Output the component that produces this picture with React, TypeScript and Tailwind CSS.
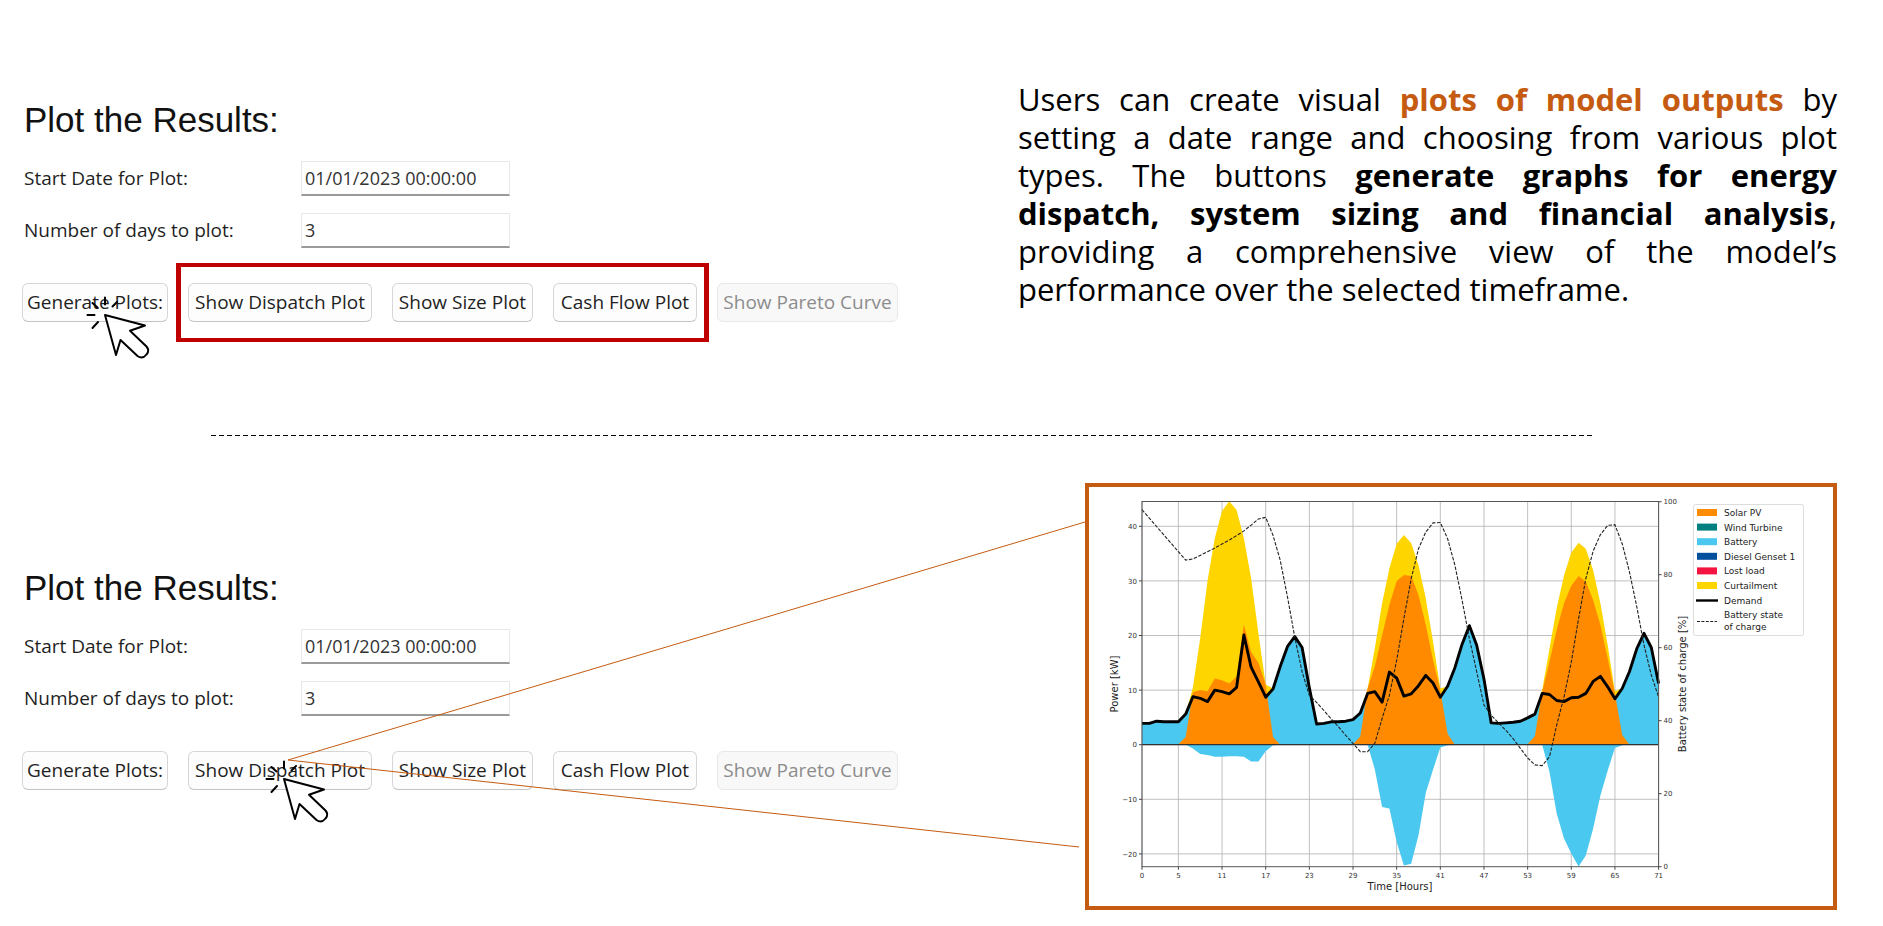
import { useId } from "react";

const px = (h: number) => 53 + h * 7.276;
const py = (v: number) => 257.7 - v * 5.46;
const ps = (s: number) => 379.7 - s * 3.65;

const demand = [
  3.9, 3.9, 4.3, 4.2, 4.2, 4.2, 5.6, 8.8, 8.5, 7.9, 10, 9.7, 9.3, 10.5, 20.1, 14.2, 11.5, 8.7, 10.2, 14.3, 18, 19.8,
  17.8, 10.5, 3.8, 3.9, 4.2, 4.2, 4.3, 4.6, 5.8, 9.4, 9.7, 7.8, 13.3, 12.2, 8.9, 9.3, 10.8, 12.7, 11.3, 8.7, 10.7,
  14.1, 18.4, 21.8, 18.2, 12, 4, 3.9, 4, 4.1, 4.3, 4.9, 5.6, 9.4, 9.2, 8.1, 7.9, 8.6, 8.7, 9.4, 11.6, 12.5, 10.6, 8.4,
  10.3, 13.4, 17.6, 20.4, 17.8, 11.2,
];

const charge = [
  97.8, 95.5, 93.2, 90.9, 88.6, 86.3, 84, 84.3, 85.3, 86.3, 87.3, 88.4, 89.5, 90.7, 92, 93.6, 95.3, 95.7, 90.8, 84,
  73.9, 62.8, 53.4, 47, 45, 42.8, 40.5, 38.3, 36, 33.8, 31.5, 31.5, 33.8, 40.6, 47, 56.6, 68, 78.9, 87.1, 91.7, 94.2,
  94.3, 89.9, 82.6, 73, 62.5, 53.4, 44.3, 41.5, 39.4, 37.4, 35.1, 32.4, 29.8, 27.9, 27.7, 30.1, 38.8, 46.5, 56.1, 68,
  78.9, 86.4, 91, 93.5, 93.7, 88.5, 80.7, 71.2, 60.7, 52.5, 46.5,
];

type Area = { start: number; values: number[] };

const curtailment: Area[] = [
  { start: 6, values: [5.6, 10.5, 19.5, 30, 37.8, 42.8, 44.6, 43, 37.8, 30.5, 20.4, 11, 10.3] },
  { start: 30, values: [5.8, 10.3, 17.6, 25.9, 32.3, 36.8, 38.4, 36.9, 32.9, 26.8, 18.9, 10.3, 10.7] },
  { start: 54, values: [5.6, 10, 17.6, 25, 31, 35.2, 37, 35.9, 32, 25.9, 18.2, 9.8, 10.3] },
];

const solar: Area[] = [
  { start: 5, values: [0.1, 1.4, 9.6, 10, 9.8, 12.1, 11.8, 11.2, 12.5, 22, 17, 15, 11, 1.4, 0] },
  { start: 29, values: [0.1, 1.5, 10.3, 14.3, 20, 25.6, 30, 31.1, 30.9, 27.4, 21.9, 15.5, 10, 2, 0] },
  { start: 53, values: [0.1, 1.6, 9.7, 15.2, 21, 25.9, 29.1, 30.9, 29.9, 26.5, 21.9, 15.8, 9.4, 1.8, 0] },
];

const charging: Area[] = [
  { start: 6, values: [0, -0.7, -1.7, -1.9, -2.2, -2.2, -2.1, -2.1, -2.2, -3.1, -3.1, -1.2, -0.1, 0] },
  { start: 31, values: [0, -4.5, -11.4, -11.7, -17.8, -22.1, -21.8, -16.6, -8.8, -4.6, -0.5, -0.1, 0] },
  { start: 55, values: [0, -5, -12.6, -17.2, -19.9, -22.3, -20.3, -15.4, -9.3, -4.7, -0.6, -0.1, 0] },
];

const line = (values: number[], y: (v: number) => number, start = 0) =>
  values.map((v, i) => `${px(start + i).toFixed(1)},${y(v).toFixed(1)}`).join(" ");

const area = ({ start, values }: Area) =>
  `${px(start)},${py(0)} ${line(values, py, start)} ${px(start + values.length - 1)},${py(0)}`;

const hours = [0, 5, 11, 17, 23, 29, 35, 41, 47, 53, 59, 65, 71];
const powers = [40, 30, 20, 10, 0, -10, -20];

const legend: { name: string; color: string }[] = [
  { name: "Solar PV", color: "#ff8c00" },
  { name: "Wind Turbine", color: "#008080" },
  { name: "Battery", color: "#4ac8f0" },
  { name: "Diesel Genset 1", color: "#00509d" },
  { name: "Lost load", color: "#f4143f" },
  { name: "Curtailment", color: "#ffd500" },
];

function DispatchChart() {
  const left = px(0);
  const right = px(71);
  const top = 14.5;
  const bottom = 379.7;
  return (
    <svg
      viewBox="0 0 744 419"
      role="img"
      aria-label="Dispatch plot"
      className="block h-auto w-full font-['DejaVu_Sans',sans-serif]"
    >
      <g stroke="#b0b0b0" strokeOpacity="0.8" strokeWidth="1">
        {hours.map((h) => (
          <line key={h} x1={px(h)} x2={px(h)} y1={top} y2={bottom} />
        ))}
        {powers.map((p) => (
          <line key={p} x1={left} x2={right} y1={py(p)} y2={py(p)} />
        ))}
      </g>
      {curtailment.map((a) => (
        <polygon key={a.start} points={area(a)} fill="#ffd500" />
      ))}
      <polygon points={area({ start: 0, values: demand })} fill="#4ac8f0" />
      {charging.map((a) => (
        <polygon key={a.start} points={area(a)} fill="#4ac8f0" />
      ))}
      {solar.map((a) => (
        <polygon key={a.start} points={area(a)} fill="#ff8a00" />
      ))}
      <line x1={left} x2={right} y1={py(0)} y2={py(0)} stroke="#333" strokeWidth="1.2" />
      <polyline points={line(demand, py)} fill="none" stroke="#000" strokeWidth="2.9" strokeLinejoin="round" />
      <polyline points={line(charge, ps)} fill="none" stroke="#222" strokeWidth="1.1" strokeDasharray="3.500 1.500" />
      <rect x={left} y={top} width={right - left} height={bottom - top} fill="none" stroke="#555" strokeWidth="1" />
      <g fontSize="7" fill="#333">
        {hours.map((h) => (
          <g key={h}>
            <line x1={px(h)} x2={px(h)} y1={bottom} y2={bottom + 3} stroke="#444" />
            <text x={px(h)} y="391" textAnchor="middle">
              {h}
            </text>
          </g>
        ))}
        {powers.map((p) => (
          <g key={p}>
            <line x1={left - 3} x2={left} y1={py(p)} y2={py(p)} stroke="#444" />
            <text x={left - 5} y={py(p) + 2.6} textAnchor="end">
              {p < 0 ? `−${-p}` : p}
            </text>
          </g>
        ))}
        {[0, 20, 40, 60, 80, 100].map((s) => (
          <g key={s}>
            <line x1={right} x2={right + 3} y1={ps(s)} y2={ps(s)} stroke="#444" />
            <text x={right + 5} y={ps(s) + 2.6}>
              {s}
            </text>
          </g>
        ))}
      </g>
      <g fontSize="10" fill="#222">
        <text x="311" y="403" textAnchor="middle">
          Time [Hours]
        </text>
        <text transform="translate(29 197) rotate(-90)" textAnchor="middle">
          Power [kW]
        </text>
        <text transform="translate(597 197) rotate(-90)" textAnchor="middle">
          Battery state of charge [%]
        </text>
      </g>
      <g fontSize="9" fill="#222">
        <rect x="604.500" y="17.500" width="110" height="131" rx="2" fill="#fff" stroke="#ddd" />
        {legend.map(({ name, color }, i) => (
          <g key={name}>
            <rect x="608" y={22 + i * 14.6} width="20" height="7" fill={color} />
            <text x="635" y={29 + i * 14.6}>
              {name}
            </text>
          </g>
        ))}
        <line x1="607" x2="629" y1="113.500" y2="113.500" stroke="#000" strokeWidth="2.4" />
        <text x="635" y="117">
          Demand
        </text>
        <line x1="608" x2="628" y1="134.500" y2="134.500" stroke="#222" strokeDasharray="3 1.4" />
        <text x="635" y="131">
          Battery state
        </text>
        <text x="635" y="142.500">
          of charge
        </text>
      </g>
    </svg>
  );
}

function ClickCursor({ className }: { className: string }) {
  return (
    <svg
      viewBox="0 0 66 66"
      aria-hidden="true"
      className={`pointer-events-none absolute z-10 size-[66px] max-w-none ${className}`}
      fill="none"
      stroke="#000"
      strokeWidth="2"
      strokeLinejoin="round"
      strokeLinecap="round"
    >
      <path
        fill="#fff"
        fillOpacity="0.9"
        d="M19 19 L59 29.500 L44 34.700 L60.500 50.500 Q64 54.500 60.500 58.500 Q56.500 63.500 51.500 60 L34.500 44 L30 59 Z"
      />
      <path d="M19 1.500V8.500M31 6L26.500 10.500M6.500 7L11.500 11.500M1.500 19H8.500M12 26L6.500 32" />
    </svg>
  );
}

const buttonClass =
  "relative h-[39px] rounded-md border border-[#d6d6d6] border-b-[#c4c4c4] bg-[#fdfdfd] text-[19px] whitespace-nowrap text-[#1f1f1f] disabled:border-[#e8e8e8] disabled:bg-[#f8f8f8] disabled:text-[#8c8c8c]";
const inputClass =
  "h-[35px] w-[209px] border border-[#e8e8e8] border-b-2 border-b-[#9a9a9a] bg-white px-[3px] text-[18px] text-[#333] outline-none";

function PlotForm({ clicked }: { clicked: "generate" | "dispatch" }) {
  const id = useId();
  return (
    <form
      className="font-['Open_Sans','Noto_Sans',sans-serif] text-[19px] text-[#1f1f1f]"
      onSubmit={(e) => e.preventDefault()}
    >
      <h2 className="ml-[2px] font-['Liberation_Sans',Arial,sans-serif] text-[35px] leading-10 text-[#111]">
        Plot the Results:
      </h2>
      <div className="mt-[21px] grid grid-cols-[277px_auto] items-center justify-start gap-y-[17px] pl-[2px]">
        <label htmlFor={`${id}-date`}>Start Date for Plot:</label>
        <input id={`${id}-date`} className={inputClass} defaultValue="01/01/2023 00:00:00" />
        <label htmlFor={`${id}-days`}>Number of days to plot:</label>
        <input id={`${id}-days`} className={inputClass} defaultValue="3" />
      </div>
      <div className="mt-[35px] flex gap-5">
        <button type="button" className={`${buttonClass} w-[146px]`}>
          Generate Plots:
          {clicked === "generate" && <ClickCursor className="top-3 left-[63px]" />}
        </button>
        <div className="relative flex gap-5">
          <button type="button" className={`${buttonClass} w-[184px]`}>
            Show Dispatch Plot
            {clicked === "dispatch" && <ClickCursor className="top-2 left-[76px]" />}
          </button>
          <button type="button" className={`${buttonClass} w-[141px]`}>
            Show Size Plot
          </button>
          <button type="button" className={`${buttonClass} w-[144px]`}>
            Cash Flow Plot
          </button>
          {clicked === "generate" && (
            <div className="pointer-events-none absolute -inset-x-3 -inset-y-5 border-x-5 border-y-4 border-[#c00000]" />
          )}
        </div>
        <button type="button" disabled className={`${buttonClass} w-[181px]`}>
          Show Pareto Curve
        </button>
      </div>
    </form>
  );
}

export default function App() {
  return (
    <main className="relative bg-white pr-[46px] pb-4 pl-[22px] text-black">
      <section className="flex items-start justify-between pt-20">
        <div className="pt-5">
          <PlotForm clicked="generate" />
        </div>
        <p className="w-[819px] text-justify font-['Open_Sans','Noto_Sans',sans-serif] text-[31px] leading-[38px]">
          Users can create visual <strong className="font-bold text-[#c55a11]">plots of model outputs</strong> by setting a
          date range and choosing from various plot types. The buttons{" "}
          <strong className="font-bold">generate graphs for energy dispatch, system sizing and financial analysis</strong>,
          providing a comprehensive view of the model’s performance over the selected timeframe.
        </p>
      </section>
      <hr className="mt-[113px] mr-[244px] ml-[189px] h-px border-0 bg-[repeating-linear-gradient(90deg,#000_0_5px,transparent_5px_8px)]" />
      <section className="mt-[47px] flex items-start justify-between">
        <div className="pt-[85px]">
          <PlotForm clicked="dispatch" />
        </div>
        <figure className="w-[752px] border-4 border-[#c55a11] bg-white">
          <DispatchChart />
        </figure>
      </section>
      <svg
        viewBox="0 0 1883 926"
        aria-hidden="true"
        className="pointer-events-none absolute top-0 left-0 h-[926px] w-[1883px]"
        fill="none"
        stroke="#c55a11"
      >
        <path d="M1085 522 L288 760 L1079 847" />
      </svg>
    </main>
  );
}
